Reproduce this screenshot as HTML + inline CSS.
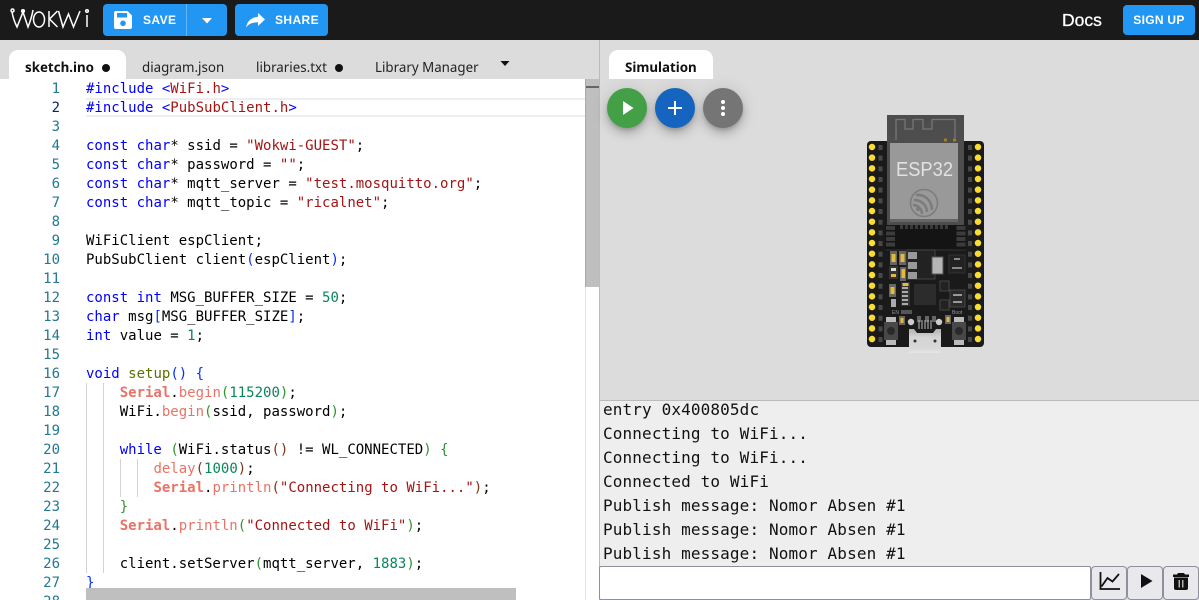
<!DOCTYPE html>
<html><head><meta charset="utf-8"><title>Wokwi</title>
<style>
*{box-sizing:border-box}
html,body{margin:0;padding:0;width:1199px;height:600px;overflow:hidden;background:#dcdcdc;font-family:"Liberation Sans",sans-serif}
.abs{position:absolute}
#top{position:absolute;left:0;top:0;width:1199px;height:40px;background:#1a1a1a}
.btn{position:absolute;top:4px;height:32px;background:#2196f3;border-radius:4px;color:#fff;font-weight:700;font-size:12px;line-height:32px;letter-spacing:.4px}
.tab{position:absolute;top:50px;height:29px;line-height:34px;font-size:13.33px;color:#222;font-family:"Noto Sans","Noto Sans CJK SC","Liberation Sans",sans-serif;white-space:nowrap}
.tab.on{background:#fff;border-radius:9px 9px 0 0;font-weight:700;color:#111}
.dot{position:absolute;width:8px;height:8px;border-radius:50%;background:#111;top:64px}
#ed{position:absolute;left:0;top:79px;width:599px;height:521px;background:#fff;overflow:hidden}
.ln{position:absolute;left:0;width:60px;margin-top:1px;text-align:right;height:19px;font:14px/19px "DejaVu Sans Mono","Liberation Mono",monospace;color:#237893}
.cl{position:absolute;left:86px;margin-top:1px;height:19px;white-space:pre;font:14px/19px "DejaVu Sans Mono","Liberation Mono",monospace;color:#000}
.k{color:#00f}.s{color:#a31515}.n{color:#098658}.f{color:#e97366}.fb{color:#e97366;font-weight:700}.o{color:#5e6d03}
.b1{color:#0431fa}.b2{color:#319331}.b3{color:#7b3814}
.g{position:absolute;width:1px;background:#d3d3d3}
.fab{position:absolute;top:88px;width:40px;height:40px;border-radius:50%;box-shadow:0 3px 5px -1px rgba(0,0,0,.2),0 6px 10px 0 rgba(0,0,0,.14),0 1px 18px 0 rgba(0,0,0,.12)}
#ser{position:absolute;left:600px;top:400px;width:599px;height:167px;background:#eee;border-top:1px solid #bbb;overflow:hidden}
.sl{position:absolute;left:3px;font:16px/24px "DejaVu Sans Mono","Liberation Mono",monospace;letter-spacing:.13px;color:#111;white-space:pre}
.sb{position:absolute;top:566px;height:34px;width:36px;background:#e9e9ed;border:1px solid #8f8f9d;border-radius:4px}
</style></head><body>
<div id="top">
<svg class="abs" style="left:10px;top:6px" width="82" height="24" viewBox="0 0 82 24" fill="none" stroke="#fff" stroke-width="1.500">
<path d="M2 6C3 12 5 17 7 21L13 6L18 21C20 16 22 10 23 4"/><circle cx="2.500" cy="4.500" r="1.500"/><circle cx="13" cy="5" r="1.300"/>
<ellipse cx="29" cy="13.500" rx="5.500" ry="7.500"/><path d="M39 5V21M47.500 5L39.500 13L47.500 21"/><path d="M48.500 5L53 21L58.500 8L63.500 21L70 5"/><path d="M77 9V21"/><circle cx="77" cy="5" r="1.300"/>
</svg>
<div class="btn" style="left:103px;width:124px">
<svg class="abs" style="left:11px;top:7px" width="18" height="18" viewBox="0 0 18 18"><path fill="#fff" d="M2 0H13.500L18 4.500V16a2 2 0 0 1-2 2H2a2 2 0 0 1-2-2V2a2 2 0 0 1 2-2Z"/><rect x="3" y="2" width="10" height="4.500" fill="#2196f3"/><circle cx="9" cy="12.300" r="2.800" fill="#2196f3"/></svg>
<span class="abs" style="left:40px;top:0">SAVE</span>
<div class="abs" style="left:83px;top:0;width:1px;height:32px;background:#64b5f6"></div>
<svg class="abs" style="left:98px;top:14px" width="12" height="6" viewBox="0 0 12 6"><path fill="#fff" d="M1 0H11L6 5.500Z"/></svg>
</div>
<div class="btn" style="left:235px;width:93px">
<svg class="abs" style="left:11px;top:9px" width="19" height="15" viewBox="0 0 19 15"><path fill="#fff" d="M12 0L19 6.500L12 13V9.300C6 9.300 2.500 11 0 14.500C1 9 4.500 4.500 12 3.700Z"/></svg>
<span class="abs" style="left:40px;top:0">SHARE</span>
</div>
<div class="abs" style="left:1062px;top:9px;color:#fff;font-size:17.500px;line-height:22px;-webkit-text-stroke:.3px #fff">Docs</div>
<div class="btn" style="left:1123px;width:72px;top:5px;height:30px;line-height:30px;text-align:center;letter-spacing:.3px">SIGN UP</div>
</div>

<div class="tab on" style="left:9px;width:117px;padding-left:16px">sketch.ino</div><div class="dot" style="left:102px"></div>
<div class="tab" style="left:142px">diagram.json</div>
<div class="tab" style="left:256px">libraries.txt</div><div class="dot" style="left:335px"></div>
<div class="tab" style="left:375px">Library Manager</div>
<svg class="abs" style="left:500px;top:61px" width="10" height="6"><path fill="#111" d="M0.500 0H9.500L5 5Z"/></svg>

<div id="ed">
<div class="abs" style="left:86px;top:19px;width:513px;height:19px;border-top:2px solid #eee;border-bottom:2px solid #eee"></div>
<div class="ln" style="top:0">1</div><div class="ln" style="top:19px;color:#0b216f">2</div><div class="ln" style="top:38px">3</div><div class="ln" style="top:57px">4</div><div class="ln" style="top:76px">5</div><div class="ln" style="top:95px">6</div><div class="ln" style="top:114px">7</div><div class="ln" style="top:133px">8</div><div class="ln" style="top:152px">9</div><div class="ln" style="top:171px">10</div><div class="ln" style="top:190px">11</div><div class="ln" style="top:209px">12</div><div class="ln" style="top:228px">13</div><div class="ln" style="top:247px">14</div><div class="ln" style="top:266px">15</div><div class="ln" style="top:285px">16</div><div class="ln" style="top:304px">17</div><div class="ln" style="top:323px">18</div><div class="ln" style="top:342px">19</div><div class="ln" style="top:361px">20</div><div class="ln" style="top:380px">21</div><div class="ln" style="top:399px">22</div><div class="ln" style="top:418px">23</div><div class="ln" style="top:437px">24</div><div class="ln" style="top:456px">25</div><div class="ln" style="top:475px">26</div><div class="ln" style="top:494px">27</div><div class="ln" style="top:513px">28</div>
<div class="g" style="left:86px;top:304px;height:190px"></div><div class="g" style="left:103px;top:304px;height:190px"></div>
<div class="g" style="left:120px;top:380px;height:38px"></div><div class="g" style="left:137px;top:380px;height:38px"></div>
<div class="cl" style="top:0"><span class="k">#include &lt;</span><span class="s">WiFi.h</span><span class="k">&gt;</span></div>
<div class="cl" style="top:19px"><span class="k">#include &lt;</span><span class="s">PubSubClient.h</span><span class="k">&gt;</span></div>
<div class="cl" style="top:57px"><span class="k">const</span> <span class="k">char</span>* ssid = <span class="s">"Wokwi-GUEST"</span>;</div>
<div class="cl" style="top:76px"><span class="k">const</span> <span class="k">char</span>* password = <span class="s">""</span>;</div>
<div class="cl" style="top:95px"><span class="k">const</span> <span class="k">char</span>* mqtt_server = <span class="s">"test.mosquitto.org"</span>;</div>
<div class="cl" style="top:114px"><span class="k">const</span> <span class="k">char</span>* mqtt_topic = <span class="s">"ricalnet"</span>;</div>
<div class="cl" style="top:152px">WiFiClient espClient;</div>
<div class="cl" style="top:171px">PubSubClient client<span class="b1">(</span>espClient<span class="b1">)</span>;</div>
<div class="cl" style="top:209px"><span class="k">const</span> <span class="k">int</span> MSG_BUFFER_SIZE = <span class="n">50</span>;</div>
<div class="cl" style="top:228px"><span class="k">char</span> msg<span class="b1">[</span>MSG_BUFFER_SIZE<span class="b1">]</span>;</div>
<div class="cl" style="top:247px"><span class="k">int</span> value = <span class="n">1</span>;</div>
<div class="cl" style="top:285px"><span class="k">void</span> <span class="o">setup</span><span class="b1">()</span> <span class="b1">{</span></div>
<div class="cl" style="top:304px">    <span class="fb">Serial</span>.<span class="f">begin</span><span class="b2">(</span><span class="n">115200</span><span class="b2">)</span>;</div>
<div class="cl" style="top:323px">    WiFi.<span class="f">begin</span><span class="b2">(</span>ssid, password<span class="b2">)</span>;</div>
<div class="cl" style="top:361px">    <span class="k">while</span> <span class="b2">(</span>WiFi.status<span class="b3">()</span> != WL_CONNECTED<span class="b2">)</span> <span class="b2">{</span></div>
<div class="cl" style="top:380px">        <span class="f">delay</span><span class="b3">(</span><span class="n">1000</span><span class="b3">)</span>;</div>
<div class="cl" style="top:399px">        <span class="fb">Serial</span>.<span class="f">println</span><span class="b3">(</span><span class="s">"Connecting to WiFi..."</span><span class="b3">)</span>;</div>
<div class="cl" style="top:418px">    <span class="b2">}</span></div>
<div class="cl" style="top:437px">    <span class="fb">Serial</span>.<span class="f">println</span><span class="b2">(</span><span class="s">"Connected to WiFi"</span><span class="b2">)</span>;</div>
<div class="cl" style="top:475px">    client.setServer<span class="b2">(</span>mqtt_server, <span class="n">1883</span><span class="b2">)</span>;</div>
<div class="cl" style="top:494px"><span class="b1">}</span></div>
<div class="abs" style="left:585px;top:0;width:14px;height:521px;border-left:1px solid #e4e4e4"></div>
<div class="abs" style="left:585px;top:0;width:14px;height:208px;background:#bfbfbf;border-left:1px solid #aaa"></div>
<div class="abs" style="left:586px;top:7px;width:13px;height:2px;background:#666"></div>
<div class="abs" style="left:86px;top:509px;width:430px;height:12px;background:#bfbfbf"></div>
</div>
<div class="abs" style="left:599px;top:40px;width:1px;height:560px;background:#bbb"></div>

<div class="tab on" style="left:609px;width:104px;padding-left:16px">Simulation</div>
<div class="fab" style="left:607px;background:#43a047"><svg class="abs" style="left:15px;top:12px" width="12" height="16"><path fill="#fff" d="M1 1L11.500 8L1 15Z"/></svg></div>
<div class="fab" style="left:655px;background:#1565c0"><svg class="abs" style="left:12px;top:12px" width="16" height="16"><path stroke="#fff" stroke-width="2" d="M8 1V15M1 8H15"/></svg></div>
<div class="fab" style="left:703px;background:#757575"><svg class="abs" style="left:16px;top:10px" width="8" height="20"><circle cx="4" cy="4" r="2" fill="#fff"/><circle cx="4" cy="10" r="2" fill="#fff"/><circle cx="4" cy="16" r="2" fill="#fff"/></svg></div>

<svg class="abs" style="left:860px;top:110px" width="130" height="245" viewBox="860 110 130 245">
<defs><linearGradient id="u" x1="0" y1="0" x2="0" y2="1"><stop offset="0" stop-color="#b0b0b0"/><stop offset=".35" stop-color="#d4d4d4"/><stop offset=".8" stop-color="#d8d8d8"/><stop offset="1" stop-color="#e6e6e6"/></linearGradient></defs>
<rect x="867" y="141" width="117" height="206" rx="4" fill="#1a1a1a"/>
<rect x="887" y="115" width="77" height="110" fill="#4d4d4d"/>
<path d="M896 140V119.500H905V129H913V119.500H923V129H932V119.500H955V138" fill="none" stroke="#767676" stroke-width="1.300"/>
<rect x="944" y="138.500" width="3" height="3" fill="#a08020"/><rect x="953" y="138.500" width="3" height="3" fill="#a08020"/>
<rect x="890" y="143" width="68" height="77" fill="#999"/>
<rect x="890" y="219" width="68" height="3" fill="#666"/>
<text x="896" y="176" textLength="57" lengthAdjust="spacingAndGlyphs" font-family="'Liberation Sans',sans-serif" font-size="20" fill="#e2e2e2">ESP32</text>
<circle cx="924" cy="203" r="13.500" fill="none" stroke="#7c7c7c" stroke-width="1.500"/>
<path d="M916 195C925 194 932 201 932 210M914 200C921 200 927 205 927 212M913 205C918 205 922 209 922 214" fill="none" stroke="#7c7c7c" stroke-width="2.500"/><circle cx="918" cy="209" r="2" fill="#7c7c7c"/>
<rect x="885" y="225" width="81" height="24" fill="#141414"/>
<path d="M900 227H950" stroke="#3a3a3a" stroke-width="4" stroke-dasharray="3 2"/>
<path d="M890.500 226V248M961 226V248" stroke="#3c3c3c" stroke-width="9" stroke-dasharray="4 1.500"/>
<path d="M886 250H966" stroke="#333" stroke-width="1"/>
<path d="M872 147V340M978 147V340" stroke="#fbdc30" stroke-width="6.500" stroke-linecap="round" stroke-dasharray="0 10.670"/>
<path d="M880.500 145V342M970 145V342" stroke="#484848" stroke-width="4" stroke-dasharray="5 5.670"/>
<!-- regulator -->
<rect x="907" y="250" width="28" height="29" fill="#222" stroke="#444"/>
<rect x="908" y="252" width="9" height="7" fill="#999"/><rect x="908" y="262" width="9" height="7" fill="#999"/><rect x="908" y="272" width="9" height="7" fill="#999"/>
<rect x="932" y="257" width="11" height="17" fill="#b5b5b5" stroke="#555"/>
<!-- small caps -->
<rect x="890" y="251" width="7" height="14" fill="#666"/><rect x="891.500" y="254" width="4" height="8" fill="#e5b93a"/>
<rect x="899" y="251" width="7" height="14" fill="#666"/><rect x="900.500" y="254" width="4" height="8" fill="#e5b93a"/>
<rect x="889" y="266" width="9" height="13" fill="#333"/><rect x="891" y="268" width="5" height="3" fill="#ddd"/><rect x="891" y="274" width="5" height="3" fill="#e5b93a"/>
<rect x="900" y="267" width="6" height="14" fill="#666"/><rect x="901.500" y="269" width="3.500" height="9" fill="#e5b93a"/>
<rect x="889" y="284" width="7" height="13" fill="#666"/><rect x="890.500" y="287" width="4" height="7" fill="#e5b93a"/>
<rect x="901" y="282" width="9" height="24" fill="#333"/><rect x="902.500" y="283" width="6" height="3" fill="#e5b93a"/><path d="M905 287V305" stroke="#aaa" stroke-width="6" stroke-dasharray="2 2"/>
<rect x="891" y="299" width="5" height="8" fill="#aaa"/>
<text x="892" y="314" font-size="5" fill="#999" font-family="'Liberation Sans',sans-serif">EN</text>
<rect x="901" y="310" width="11" height="4" fill="#555"/>
<!-- MCU -->
<rect x="914" y="284" width="22" height="21" rx="1" fill="#2c2c2c"/>
<path d="M919 316V322M927 316V322M934 316V322" stroke="#666" stroke-width="4"/>
<rect x="940" y="281" width="9" height="10" fill="#222" stroke="#444"/><rect x="940" y="300" width="9" height="10" fill="#222" stroke="#444"/>
<rect x="950" y="290" width="15" height="17" fill="#2a2a2a" stroke="#444"/><path d="M953 295H962M953 302H962" stroke="#999" stroke-width="2"/>
<rect x="949" y="255" width="16" height="18" fill="#222" stroke="#333"/><path d="M952 268H962M954 259H960" stroke="#888" stroke-width="2"/>
<text x="952" y="314" font-size="5" fill="#999" font-family="'Liberation Sans',sans-serif">Boot</text>
<rect x="899" y="316" width="6" height="9" fill="#666"/><rect x="900.500" y="318" width="3" height="5" fill="#e5b93a"/>
<rect x="945" y="315" width="6" height="9" fill="#666"/><rect x="946.500" y="317" width="3" height="5" fill="#e5b93a"/>
<!-- buttons -->
<rect x="886" y="317" width="10" height="28" fill="#bbb"/><rect x="884" y="322" width="14" height="18" fill="#484848"/><circle cx="891" cy="331" r="4" fill="#2a2a2a"/>
<rect x="954" y="317" width="10" height="28" fill="#bbb"/><rect x="952" y="322" width="14" height="18" fill="#484848"/><circle cx="959" cy="331" r="4" fill="#2a2a2a"/>
<!-- usb -->
<circle cx="911" cy="322" r="3.200" fill="#ccc"/><circle cx="939" cy="322" r="3.200" fill="#ccc"/>
<path d="M919 320V329M922 320V329M925 320V329M928 320V329M931 320V329" stroke="#bbb" stroke-width="1"/>
<path d="M909 329H914L917 333H933L936 329H941V353H909Z" fill="url(#u)"/>
<circle cx="915" cy="341" r="1.500" fill="#333"/><circle cx="935" cy="341" r="1.500" fill="#333"/>
</svg>

<div id="ser">
<div class="sl" style="top:-3px">entry 0x400805dc</div>
<div class="sl" style="top:21px">Connecting to WiFi...</div>
<div class="sl" style="top:45px">Connecting to WiFi...</div>
<div class="sl" style="top:69px">Connected to WiFi</div>
<div class="sl" style="top:93px">Publish message: Nomor Absen #1</div>
<div class="sl" style="top:117px">Publish message: Nomor Absen #1</div>
<div class="sl" style="top:141px">Publish message: Nomor Absen #1</div>
</div>
<div class="abs" style="left:599px;top:566px;width:492px;height:34px;background:#fff;border:1px solid #8f8f9d;border-radius:2px"></div>
<div class="sb" style="left:1091px"><svg class="abs" style="left:7px;top:5px" width="22" height="19" viewBox="0 0 22 19" fill="none" stroke="#111" stroke-width="1.800"><path d="M1.500 0V17H21"/><path d="M2.500 14.500L8.500 6L13.500 9.500L20 2"/></svg></div>
<div class="sb" style="left:1127px"><svg class="abs" style="left:13px;top:7px" width="12" height="14"><path fill="#111" d="M0 0V14L11.500 7Z"/></svg></div>
<div class="sb" style="left:1163px"><svg class="abs" style="left:9px;top:6px" width="16" height="17" viewBox="0 0 16 17"><path fill="#111" d="M5 0H11L12 1.500H16V4H0V1.500H4ZM1 4.500H15V15a2 2 0 0 1-2 2H3a2 2 0 0 1-2-2Z"/><path stroke="#e9e9ed" stroke-width="1.100" d="M6.200 7V14.500M9.800 7V14.500"/></svg></div>
</body></html>
